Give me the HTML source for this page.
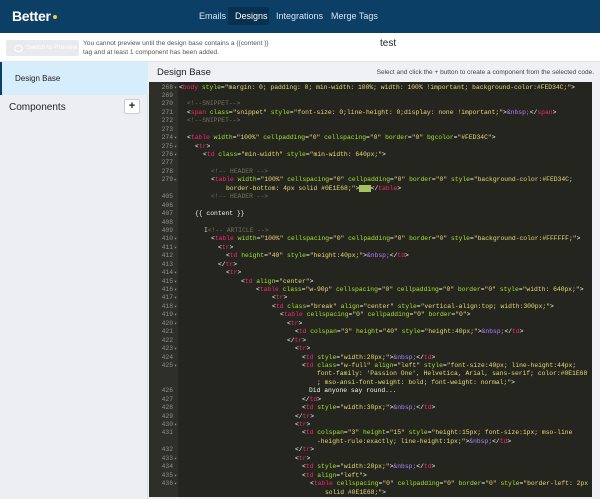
<!DOCTYPE html>
<html><head><meta charset="utf-8"><style>
*{margin:0;padding:0;box-sizing:border-box}
body{width:600px;height:499px;overflow:hidden;font-family:"Liberation Sans",sans-serif;background:#eef0f3;position:relative}
.hdr{position:absolute;left:0;top:0;width:600px;height:33px;background:#0c3f66}
.logo{position:absolute;left:12px;top:8px;color:#fff;font-weight:bold;font-size:14px;letter-spacing:-0.3px}
.logo i{display:inline-block;width:4px;height:4px;border-radius:50%;background:#f5c842;margin-left:2px;vertical-align:2px}
.nav{position:absolute;top:11px;color:#d8e4ef;font-size:9px}
.act{position:absolute;left:228px;top:7px;width:41px;height:18px;background:#08304f;border-radius:2px}
.tb{position:absolute;left:0;top:33px;width:600px;height:29px;background:#fff;border-bottom:1px solid #e3e5e8}
.btn{position:absolute;left:6px;top:7px;width:73px;height:16px;background:#e8eaee;border-radius:2px;color:#fff;font-size:6.5px;line-height:16px;padding-left:20px}
.btn:before{content:"";position:absolute;left:8px;top:5px;width:7px;height:5px;border:1px solid #fff;border-radius:50%}
.msg{position:absolute;left:83px;top:7px;font-size:6.6px;color:#555;line-height:8.6px}
.ttl{position:absolute;left:380px;top:5px;font-size:10px;color:#222}
.side{position:absolute;left:0;top:62px;width:148px;height:437px;background:#eceef1;border-right:1px solid #dde0e4}
.sel{position:absolute;left:0;top:0;width:148px;height:33px;background:#d6eefb;border-left:2px solid #0c3f66;font-size:8px;color:#222;padding:12px 0 0 13px}
.comp{position:absolute;left:9px;top:40px;font-size:10px;color:#222}
.plus{position:absolute;left:124px;top:37px;width:16px;height:15px;background:#fff;border:1px solid #ccd;border-radius:2px;font-size:11px;line-height:13px;text-align:center;color:#222;font-weight:bold}
.mt{position:absolute;left:157px;top:67px;font-size:9.5px;color:#222}
.note{position:absolute;right:6px;top:69px;font-size:6.5px;color:#444}
.ed{position:absolute;left:149px;top:82px;width:443px;height:415px;background:#24251f;overflow:hidden}
.gut{position:absolute;left:0;top:0;width:29px;height:415px;background:#2e2f29}
.code{position:absolute;left:0;top:1.5px;width:443px;font-family:"Liberation Mono",monospace;font-size:6.35px;line-height:8.45px;color:#f8f8f2}
.l{position:relative;height:8.45px}
.n{position:absolute;left:0;width:24px;text-align:right;color:#8f908a}
.f{position:absolute;left:25px;color:#8f908a;font-size:5px}
.x{position:absolute;white-space:pre}
.t{color:#f92672}.a{color:#a6e22e}.s{color:#e6db74}.c{color:#75715e}.e{color:#ae81ff}
</style></head><body>
<div class="hdr">
<div class="logo">Better<i></i></div>
<div class="act"></div>
<div class="nav" style="left:199px">Emails</div>
<div class="nav" style="left:235px;color:#fff">Designs</div>
<div class="nav" style="left:276px">Integrations</div>
<div class="nav" style="left:331px">Merge Tags</div>
</div>
<div class="tb">
<div class="btn">Switch to Preview</div>
<div class="msg">You cannot preview until the design base contains a {{content }}<br>tag and at least 1 component has been added.</div>
<div class="ttl">test</div>
</div>
<div class="side">
<div class="sel">Design Base</div>
<div class="comp">Components</div>
<div class="plus">+</div>
</div>
<div class="mt">Design Base</div>
<div class="note">Select and click the + button to create a component from the selected code.</div>
<div class="ed"><div class="gut"></div>
<div class="code">
<div class="l"><span class="n">268</span><span class="f">▾</span><span class="x" style="left:30px">&lt;<span class="t">body</span> <span class="a">style</span>=<span class="s">"margin: 0; padding: 0; min-width: 100%; width: 100% !important; background-color:#FED34C;"</span>&gt;</span></div>
<div class="l"><span class="n">269</span></div>
<div class="l"><span class="n">270</span><span class="x c" style="left:38px">&lt;!--SNIPPET--&gt;</span></div>
<div class="l"><span class="n">271</span><span class="x" style="left:38px">&lt;<span class="t">span</span> <span class="a">class</span>=<span class="s">"snippet"</span> <span class="a">style</span>=<span class="s">"font-size: 0;line-height: 0;display: none !important;"</span>&gt;<span class="e">&amp;nbsp;</span>&lt;/<span class="t">span</span>&gt;</span></div>
<div class="l"><span class="n">272</span><span class="x c" style="left:38px">&lt;!--SNIPPET--&gt;</span></div>
<div class="l"><span class="n">273</span></div>
<div class="l"><span class="n">274</span><span class="f">▾</span><span class="x" style="left:38px">&lt;<span class="t">table</span> <span class="a">width</span>=<span class="s">"100%"</span> <span class="a">cellpadding</span>=<span class="s">"0"</span> <span class="a">cellspacing</span>=<span class="s">"0"</span> <span class="a">border</span>=<span class="s">"0"</span> <span class="a">bgcolor</span>=<span class="s">"#FED34C"</span>&gt;</span></div>
<div class="l"><span class="n">275</span><span class="f">▾</span><span class="x" style="left:46px">&lt;<span class="t">tr</span>&gt;</span></div>
<div class="l"><span class="n">276</span><span class="f">▾</span><span class="x" style="left:54px">&lt;<span class="t">td</span> <span class="a">class</span>=<span class="s">"min-width"</span> <span class="a">style</span>=<span class="s">"min-width: 640px;"</span>&gt;</span></div>
<div class="l"><span class="n">277</span></div>
<div class="l"><span class="n">278</span><span class="x c" style="left:62px">&lt;!-- HEADER --&gt;</span></div>
<div class="l"><span class="n">279</span><span class="f">▸</span><span class="x" style="left:62px">&lt;<span class="t">table</span> <span class="a">width</span>=<span class="s">"100%"</span> <span class="a">cellspacing</span>=<span class="s">"0"</span> <span class="a">cellpadding</span>=<span class="s">"0"</span> <span class="a">border</span>=<span class="s">"0"</span> <span class="a">style</span>=<span class="s">"background-color:#FED34C;</span></span></div>
<div class="l"><span class="x" style="left:77px"><span class="s">border-bottom: 4px solid #0E1E68;"</span>&gt;<span style="background:#a6c25e;color:#a6c25e">xxx</span>&lt;/<span class="t">table</span>&gt;</span></div>
<div class="l"><span class="n">405</span><span class="x c" style="left:62px">&lt;!-- HEADER --&gt;</span></div>
<div class="l"><span class="n">406</span></div>
<div class="l"><span class="n">407</span><span class="x" style="left:46px">{{ content }}</span></div>
<div class="l"><span class="n">408</span></div>
<div class="l"><span class="n">409</span><span class="x c" style="left:55px"><span style="color:#ccc">I</span>&lt;!-- ARTICLE --&gt;</span></div>
<div class="l"><span class="n">410</span><span class="f">▾</span><span class="x" style="left:62px">&lt;<span class="t">table</span> <span class="a">width</span>=<span class="s">"100%"</span> <span class="a">cellspacing</span>=<span class="s">"0"</span> <span class="a">cellpadding</span>=<span class="s">"0"</span> <span class="a">border</span>=<span class="s">"0"</span> <span class="a">style</span>=<span class="s">"background-color:#FFFFFF;"</span>&gt;</span></div>
<div class="l"><span class="n">411</span><span class="f">▾</span><span class="x" style="left:69px">&lt;<span class="t">tr</span>&gt;</span></div>
<div class="l"><span class="n">412</span><span class="x" style="left:77px">&lt;<span class="t">td</span> <span class="a">height</span>=<span class="s">"40"</span> <span class="a">style</span>=<span class="s">"height:40px;"</span>&gt;<span class="e">&amp;nbsp;</span>&lt;/<span class="t">td</span>&gt;</span></div>
<div class="l"><span class="n">413</span><span class="x" style="left:69px">&lt;/<span class="t">tr</span>&gt;</span></div>
<div class="l"><span class="n">414</span><span class="f">▾</span><span class="x" style="left:77px">&lt;<span class="t">tr</span>&gt;</span></div>
<div class="l"><span class="n">415</span><span class="f">▾</span><span class="x" style="left:92px">&lt;<span class="t">td</span> <span class="a">align</span>=<span class="s">"center"</span>&gt;</span></div>
<div class="l"><span class="n">416</span><span class="f">▾</span><span class="x" style="left:107px">&lt;<span class="t">table</span> <span class="a">class</span>=<span class="s">"w-90p"</span> <span class="a">cellspacing</span>=<span class="s">"0"</span> <span class="a">cellpadding</span>=<span class="s">"0"</span> <span class="a">border</span>=<span class="s">"0"</span> <span class="a">style</span>=<span class="s">"width: 640px;"</span>&gt;</span></div>
<div class="l"><span class="n">417</span><span class="f">▾</span><span class="x" style="left:123px">&lt;<span class="t">tr</span>&gt;</span></div>
<div class="l"><span class="n">418</span><span class="f">▾</span><span class="x" style="left:123px">&lt;<span class="t">td</span> <span class="a">class</span>=<span class="s">"break"</span> <span class="a">align</span>=<span class="s">"center"</span> <span class="a">style</span>=<span class="s">"vertical-align:top; width:300px;"</span>&gt;</span></div>
<div class="l"><span class="n">419</span><span class="f">▾</span><span class="x" style="left:131px">&lt;<span class="t">table</span> <span class="a">cellspacing</span>=<span class="s">"0"</span> <span class="a">cellpadding</span>=<span class="s">"0"</span> <span class="a">border</span>=<span class="s">"0"</span>&gt;</span></div>
<div class="l"><span class="n">420</span><span class="f">▾</span><span class="x" style="left:138px">&lt;<span class="t">tr</span>&gt;</span></div>
<div class="l"><span class="n">421</span><span class="x" style="left:146px">&lt;<span class="t">td</span> <span class="a">colspan</span>=<span class="s">"3"</span> <span class="a">height</span>=<span class="s">"40"</span> <span class="a">style</span>=<span class="s">"height:40px;"</span>&gt;<span class="e">&amp;nbsp;</span>&lt;/<span class="t">td</span>&gt;</span></div>
<div class="l"><span class="n">422</span><span class="x" style="left:138px">&lt;/<span class="t">tr</span>&gt;</span></div>
<div class="l"><span class="n">423</span><span class="f">▾</span><span class="x" style="left:146px">&lt;<span class="t">tr</span>&gt;</span></div>
<div class="l"><span class="n">424</span><span class="x" style="left:153px">&lt;<span class="t">td</span> <span class="a">style</span>=<span class="s">"width:20px;"</span>&gt;<span class="e">&amp;nbsp;</span>&lt;/<span class="t">td</span>&gt;</span></div>
<div class="l"><span class="n">425</span><span class="f">▾</span><span class="x" style="left:153px">&lt;<span class="t">td</span> <span class="a">class</span>=<span class="s">"w-full"</span> <span class="a">align</span>=<span class="s">"left"</span> <span class="a">style</span>=<span class="s">"font-size:40px; line-height:44px;</span></span></div>
<div class="l"><span class="x s" style="left:168px">font-family: 'Passion One', Helvetica, Arial, sans-serif; color:#0E1E68</span></div>
<div class="l"><span class="x s" style="left:168px">; mso-ansi-font-weight: bold; font-weight: normal;"<span style="color:#f8f8f2">&gt;</span></span></div>
<div class="l"><span class="n">426</span><span class="x" style="left:160px">Did anyone say round...</span></div>
<div class="l"><span class="n">427</span><span class="x" style="left:153px">&lt;/<span class="t">td</span>&gt;</span></div>
<div class="l"><span class="n">428</span><span class="x" style="left:153px">&lt;<span class="t">td</span> <span class="a">style</span>=<span class="s">"width:30px;"</span>&gt;<span class="e">&amp;nbsp;</span>&lt;/<span class="t">td</span>&gt;</span></div>
<div class="l"><span class="n">429</span><span class="x" style="left:146px">&lt;/<span class="t">tr</span>&gt;</span></div>
<div class="l"><span class="n">430</span><span class="f">▾</span><span class="x" style="left:146px">&lt;<span class="t">tr</span>&gt;</span></div>
<div class="l"><span class="n">431</span><span class="x" style="left:153px">&lt;<span class="t">td</span> <span class="a">colspan</span>=<span class="s">"3"</span> <span class="a">height</span>=<span class="s">"15"</span> <span class="a">style</span>=<span class="s">"height:15px; font-size:1px; mso-line</span></span></div>
<div class="l"><span class="x" style="left:168px"><span class="s">-height-rule:exactly; line-height:1px;"</span>&gt;<span class="e">&amp;nbsp;</span>&lt;/<span class="t">td</span>&gt;</span></div>
<div class="l"><span class="n">432</span><span class="x" style="left:146px">&lt;/<span class="t">tr</span>&gt;</span></div>
<div class="l"><span class="n">433</span><span class="f">▾</span><span class="x" style="left:146px">&lt;<span class="t">tr</span>&gt;</span></div>
<div class="l"><span class="n">434</span><span class="x" style="left:153px">&lt;<span class="t">td</span> <span class="a">style</span>=<span class="s">"width:20px;"</span>&gt;<span class="e">&amp;nbsp;</span>&lt;/<span class="t">td</span>&gt;</span></div>
<div class="l"><span class="n">435</span><span class="f">▾</span><span class="x" style="left:153px">&lt;<span class="t">td</span> <span class="a">align</span>=<span class="s">"left"</span>&gt;</span></div>
<div class="l"><span class="n">436</span><span class="f">▾</span><span class="x" style="left:161px">&lt;<span class="t">table</span> <span class="a">cellspacing</span>=<span class="s">"0"</span> <span class="a">cellpadding</span>=<span class="s">"0"</span> <span class="a">border</span>=<span class="s">"0"</span> <span class="a">style</span>=<span class="s">"border-left: 2px</span></span></div>
<div class="l"><span class="x" style="left:176px"><span class="s">solid #0E1E68;"</span>&gt;</span></div>
</div></div>
</body></html>
